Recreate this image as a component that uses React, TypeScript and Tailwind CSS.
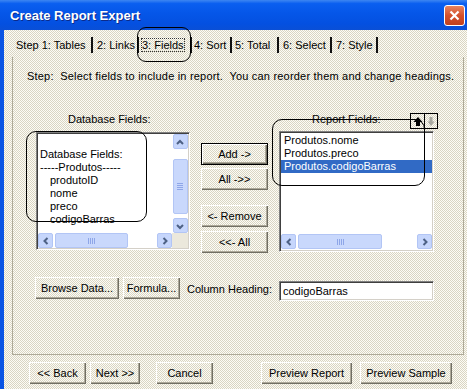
import React from "react";

function Chev({ dir }: { dir: "up" | "down" | "left" | "right" }) {
  const d = {
    up: "M3 8 L6 5 L9 8",
    down: "M3 5 L6 8 L9 5",
    left: "M7.5 3 L4.5 6 L7.5 9",
    right: "M4.5 3 L7.5 6 L4.5 9",
  }[dir];
  return (
    <svg width="12" height="12" viewBox="0 0 12 12">
      <path d={d} fill="none" stroke="#4d6185" strokeWidth="2" />
    </svg>
  );
}

function SBtn({ dir }: { dir: "up" | "down" | "left" | "right" }) {
  return (
    <div className="w-[15px] h-[15px] shrink-0 flex items-center justify-center bg-[#c6d6fc] border border-[#b2c5f5] rounded-[2px]">
      <Chev dir={dir} />
    </div>
  );
}

function HThumb({ w, ml }: { w: number; ml: string }) {
  return (
    <div
      className={`h-[15px] ${ml} shrink-0 bg-[#c9d8fc] border border-[#b2c5f5] rounded-[2px] flex items-center justify-center gap-[1px]`}
      style={{ width: w }}
    >
      <div className="w-[1px] h-[6px] bg-[#8ea6e8]" />
      <div className="w-[1px] h-[6px] bg-[#8ea6e8]" />
      <div className="w-[1px] h-[6px] bg-[#8ea6e8]" />
      <div className="w-[1px] h-[6px] bg-[#8ea6e8]" />
    </div>
  );
}

function Btn({
  children,
  className = "",
  def = false,
}: {
  children: React.ReactNode;
  className?: string;
  def?: boolean;
}) {
  return (
    <div
      className={`h-[22px] shrink-0 flex items-center justify-center text-[11px] leading-[13px] text-black whitespace-pre ${
        def
          ? "border border-black shadow-[inset_1px_1px_0_#ffffff,inset_-1px_-1px_0_#716f64,inset_-2px_-2px_0_#aca899]"
          : "shadow-[inset_1px_1px_0_#ffffff,inset_-1px_-1px_0_#716f64,inset_-2px_-2px_0_#aca899]"
      } ${className}`}
    >
      {children}
    </div>
  );
}

const sunken =
  "bg-white border border-t-[#808080] border-l-[#808080] border-r-white border-b-white shadow-[inset_1px_1px_0_#404040,inset_-1px_-1px_0_#d4d0c8]";

export default function App() {
  return (
    <div className="relative w-[467px] h-[389px] overflow-hidden flex flex-col font-['Liberation_Sans',Arial,sans-serif] text-black">
      {/* Title bar */}
      <div className="h-[30px] shrink-0 relative flex items-center pl-[10px] bg-[linear-gradient(to_bottom,#3d86f2_0%,#0a5ff0_12%,#0556e8_45%,#0450e0_80%,#0a4fd6_100%)]">
        <span className="text-white font-bold text-[13px] leading-[16px] [text-shadow:1px_1px_0_#0c2a8a] pt-[2px]">
          Create Report Expert
        </span>
        <div className="absolute left-[444px] top-[5px] w-[21px] h-[21px] rounded-[3px] border border-white bg-[linear-gradient(to_bottom,#e8845f,#d4502c_50%,#c0401d)] flex items-center justify-center">
          <svg width="13" height="13" viewBox="0 0 13 13">
            <path d="M2.5 2.5 L10.5 10.5 M10.5 2.5 L2.5 10.5" stroke="#ffffff" strokeWidth="2.2" />
          </svg>
        </div>
      </div>

      {/* Body */}
      <div className="flex-1 flex flex-col border-l-[4px] border-[#0a54e4] bg-[#ebe8dc] bg-[conic-gradient(#fdfcf6_25%,#d9d5c3_0_50%,#fdfcf6_0_75%,#d9d5c3_0)] bg-[length:2px_2px]">
        {/* Tabs */}
        <div className="h-[27px] shrink-0 flex items-center pl-[12px] pt-[3px] text-[11px] leading-[13px]">
          <div className="w-[75px]">Step 1: Tables</div>
          <div className="w-[2px] h-[16px] bg-[#111]" />
          <div className="w-[44px] pl-[4px]">2: Links</div>
          <div className="w-[2px] h-[16px] bg-[#111]" />
          <div className="w-[51px] pl-[3px]">
            <span className="outline outline-1 outline-dotted outline-[#333] outline-offset-0">3: Fields</span>
          </div>
          <div className="w-[2px] h-[16px] bg-[#111]" />
          <div className="w-[38px] pl-[2px]">4: Sort</div>
          <div className="w-[2px] h-[16px] bg-[#111]" />
          <div className="w-[45px] pl-[3px]">5: Total</div>
          <div className="w-[2px] h-[16px] bg-[#111]" />
          <div className="w-[51px] pl-[4px]">6: Select</div>
          <div className="w-[2px] h-[16px] bg-[#111]" />
          <div className="w-[44px] pl-[4px]">7: Style</div>
          <div className="w-[2px] h-[16px] bg-[#111]" />
        </div>

        {/* Panel */}
        <div className="ml-[8px] w-[452px] h-[298px] shrink-0 border border-t-0 border-[#aeaa98] flex flex-col">
          <div className="mt-[13px] pl-[14px] text-[11px] leading-[13px] tracking-[0.2px] whitespace-pre">
            {"Step:  Select fields to include in report.  You can reorder them and change headings."}
          </div>

          <div className="mt-[30px] pl-[23px] flex items-start">
            {/* Left column */}
            <div className="w-[154px] shrink-0">
              <div className="pl-[32px] text-[11px] leading-[13px]">Database Fields:</div>
              <div className={`mt-[6px] h-[118px] flex flex-col p-[1px] ${sunken}`}>
                <div className="flex flex-1 min-h-0">
                  <div className="flex-1 pt-[1px] pl-[2px] text-[11px] leading-[13px] whitespace-pre">
                    <div className="h-[13px]" />
                    <div>Database Fields:</div>
                    <div>-----Produtos-----</div>
                    <div className="pl-[10px]">produtoID</div>
                    <div className="pl-[10px]">nome</div>
                    <div className="pl-[10px]">preco</div>
                    <div className="pl-[10px]">codigoBarras</div>
                  </div>
                  <div className="w-[16px] shrink-0 flex flex-col items-center">
                    <SBtn dir="up" />
                    <div className="mt-[10px] w-[15px] h-[55px] bg-[#c9d8fc] border border-[#b2c5f5] rounded-[2px] flex flex-col items-center justify-center gap-[1px]">
                      <div className="w-[6px] h-[1px] bg-[#8ea6e8]" />
                      <div className="w-[6px] h-[1px] bg-[#8ea6e8]" />
                      <div className="w-[6px] h-[1px] bg-[#8ea6e8]" />
                      <div className="w-[6px] h-[1px] bg-[#8ea6e8]" />
                    </div>
                    <div className="flex-1" />
                    <SBtn dir="down" />
                  </div>
                </div>
                <div className="h-[15px] shrink-0 flex">
                  <SBtn dir="left" />
                  <HThumb w={73} ml="ml-[2px]" />
                  <div className="flex-1" />
                  <SBtn dir="right" />
                  <div className="w-[16px] shrink-0 bg-[#ebe8dc]" />
                </div>
              </div>
            </div>

            {/* Middle buttons */}
            <div className="ml-[11px] w-[67px] shrink-0 flex flex-col">
              <Btn def className="mt-[30px]">{"Add ->"}</Btn>
              <Btn className="mt-[3px]">{"All ->>"}</Btn>
              <Btn className="mt-[15px]">{"<- Remove"}</Btn>
              <Btn className="mt-[4px]">{"<<- All"}</Btn>
            </div>

            {/* Right column */}
            <div className="ml-[11px] w-[155px] shrink-0 relative">
              <div className="pl-[33px] text-[11px] leading-[13px]">Report Fields:</div>
              <div className="absolute left-[131px] top-0 w-[28px] h-[16px] border border-black flex">
                <div className="w-[14px] h-full border-r border-black flex items-center justify-center">
                  <svg width="10" height="11" viewBox="0 0 10 11">
                    <path d="M5 1 L9.5 6 L7 6 L7 10 L3 10 L3 6 L0.5 6 Z" fill="#000" />
                  </svg>
                </div>
                <div className="flex-1 flex items-center justify-center">
                  <svg width="8" height="11" viewBox="0 0 8 11">
                    <path d="M4 10 L7.5 5.5 L5.5 5.5 L5.5 1 L2.5 1 L2.5 5.5 L0.5 5.5 Z" fill="#a8a8a0" />
                  </svg>
                </div>
              </div>
              <div className={`mt-[5px] h-[121px] flex flex-col p-[1px] ${sunken}`}>
                <div className="flex-1 pt-[1px] text-[11px] leading-[13px] whitespace-pre">
                  <div className="pl-[3px]">Produtos.nome</div>
                  <div className="pl-[3px]">Produtos.preco</div>
                  <div className="pl-[3px] bg-[#316ac5] text-white">Produtos.codigoBarras</div>
                </div>
                <div className="h-[15px] shrink-0 flex mb-[1px]">
                  <SBtn dir="left" />
                  <HThumb w={84} ml="ml-[2px]" />
                  <div className="flex-1" />
                  <SBtn dir="right" />
                </div>
              </div>
            </div>
          </div>

          {/* Row 2 */}
          <div className="mt-[24px] pl-[22px] flex items-start">
            <Btn className="w-[84px]">Browse Data...</Btn>
            <Btn className="w-[57px] ml-[4px]">Formula...</Btn>
            <div className="ml-[7px] w-[92px] mt-[6px] text-[11px] leading-[13px] whitespace-pre">Column Heading:</div>
            <div className={`w-[155px] h-[20px] mt-[4px] flex items-center pl-[3px] text-[11px] leading-[13px] ${sunken}`}>
              codigoBarras
            </div>
          </div>
        </div>

        {/* Bottom buttons */}
        <div className="mt-[7px] ml-[25px] flex">
          <Btn className="w-[57px]">{"<< Back"}</Btn>
          <Btn className="w-[50px] ml-[4px]">{"Next >>"}</Btn>
          <Btn className="w-[57px] ml-[16px]">Cancel</Btn>
          <Btn className="w-[91px] ml-[48px]">Preview Report</Btn>
          <Btn className="w-[92px] ml-[8px]">Preview Sample</Btn>
        </div>
      </div>

      {/* Hand-drawn annotations */}
      <div className="absolute left-[137px] top-[27px] w-[54px] h-[35px] rounded-[9px] border border-black" />
      <div className="absolute left-[26px] top-[131px] w-[121px] h-[91px] rounded-[10px] border border-black" />
      <div className="absolute left-[272px] top-[119px] w-[153px] h-[67px] rounded-[10px] border border-black" />
    </div>
  );
}
